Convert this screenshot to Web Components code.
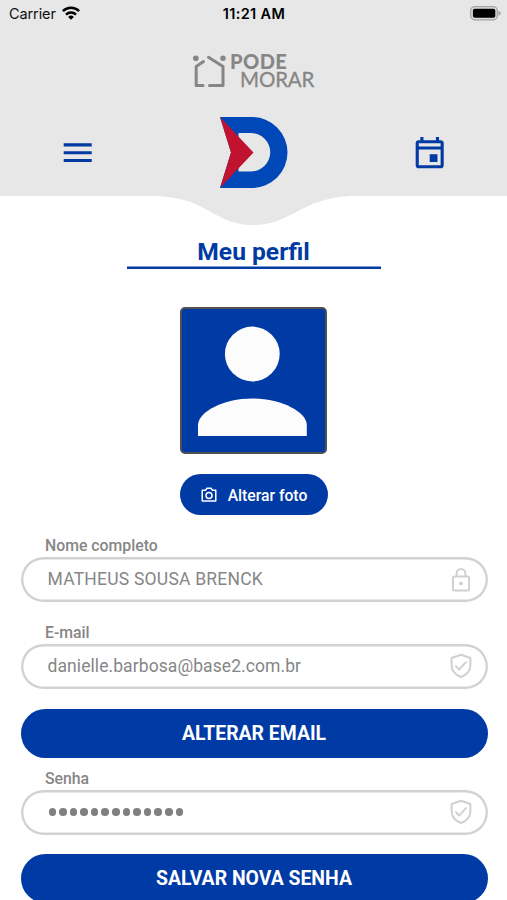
<!DOCTYPE html>
<html lang="pt-BR">
<head>
<meta charset="utf-8">
<title>Meu perfil</title>
<style>
html,body{margin:0;height:900px;overflow:hidden;background:#fff}
body{font-family:Roboto,"Liberation Sans",sans-serif}
</style>
</head>
<body>
<profile-page></profile-page>
<script>
function define(name, html) {
  const t = document.createElement('template');
  t.innerHTML = html;
  customElements.define(name, class extends HTMLElement {
    constructor() {
      super();
      this.attachShadow({mode: 'open'}).append(t.content.cloneNode(true));
    }
  });
}

define('status-bar', `
<style>
:host{display:grid;grid-template-columns:1fr auto 1fr;align-items:center;height:27px;padding:0 6px 0 9px;box-sizing:border-box;font:14.5px/27px Inter,sans-serif;color:#111}
.l{display:flex;align-items:center;gap:6px}
.l svg{margin-top:-2px}
.carrier{letter-spacing:-.1px}
.time{font-weight:600;letter-spacing:.35px;margin-right:2px;color:#000}
.r{display:flex;justify-content:flex-end}
svg{display:block}
</style>
<div class="l"><span class="carrier">Carrier</span>
<svg width="18" height="14" viewBox="0 0 18 14" fill="none" stroke="#000" stroke-width="2.5"><path d="M.9 5.2a11.5 11.5 0 0 1 16.2 0"/><path d="M4 8.6a7.1 7.1 0 0 1 10 0"/><path d="M9 13.8 6.1 10.9a4.1 4.1 0 0 1 5.8 0z" fill="#000" stroke="none"/></svg></div>
<span class="time">11:21 AM</span>
<div class="r"><svg width="31" height="15" viewBox="0 0 31 15"><rect x=".7" y=".7" width="26.6" height="13.1" rx="4" fill="#ddd" stroke="#a2a2a2" stroke-width="1.3"/><rect x="2.9" y="2.8" width="22.4" height="9" rx="1.8"/><path d="M28.5 4.8q2.2.8 2.2 2.5t-2.2 2.5z" fill="#a2a2a2"/></svg></div>`);

define('brand-mark', `
<style>
:host{display:flex;gap:2px;width:123px;height:40px;color:#868686;font-family:Lato,sans-serif;white-space:nowrap}
svg{display:block;flex:none}
.p,.m{display:block}
.words{padding-top:1px}
.p{font-size:20px;font-weight:900;line-height:18px;letter-spacing:.45px;margin-left:1px}
.m{font-size:20.5px;line-height:18px;letter-spacing:-.15px;margin-left:11px;-webkit-text-stroke:.3px #868686}
</style>
<svg width="35" height="40" viewBox="0 0 35 40">
<g fill="none" stroke="#868686" stroke-width="3" stroke-linecap="round" stroke-linejoin="round"><path d="M11 34.5H4.2V15.5L11.5 10.5"/><path d="M17.5 34.5H31V15.5L16.5 6.3"/></g>
<circle cx="3.8" cy="7.2" r="2.8" fill="#868686"/><circle cx="31" cy="7.2" r="2.7" fill="#868686"/></svg>
<div class="words"><span class="p">PODE</span><span class="m">MORAR</span></div>`);

define('app-header', `
<style>
:host{display:block;height:225px;background:linear-gradient(#e7e7e7 0 0) top/100% 196px no-repeat}
.brand{display:flex;justify-content:center;height:66px;padding-top:24px}
.nav{display:grid;grid-template-columns:38px 68px 38px;justify-content:space-between;align-items:center;height:71px;padding:0 58px 0 59px}
svg{display:block}
.wave{margin:8px auto 0}
</style>
<status-bar></status-bar>
<div class="brand"><brand-mark></brand-mark></div>
<div class="nav">
<svg width="37.4" height="37.4" viewBox="0 0 24 24" fill="#003aa3"><path d="M3 18h18v-2H3zM3 13h18v-2H3zM3 6v2h18V6z"/></svg>
<svg width="68" height="71" viewBox="0 0 68 71"><path fill="#0047b8" fill-rule="evenodd" d="M0 0H32A35.5 35.5 0 0 1 32 71H0L11 35.5zM18.5 16V54.5H31A19.25 19.25 0 0 0 31 16z"/><path fill="#c1132f" d="M0 0 33.5 35.5 0 71 11 35.5z"/></svg>
<svg width="37.4" height="37.4" viewBox="0 0 24 24" fill="#003aa3"><path d="M19 4h-1V2h-2v2H8V2H6v2H5a2 2 0 0 0-2 2v14a2 2 0 0 0 2 2h14a2 2 0 0 0 2-2V6a2 2 0 0 0-2-2zm0 16H5V10h14zm0-12H5V6h14zm-2 5h-5v5h5z"/></svg>
</div>
<svg class="wave" width="206" height="29" viewBox="0 0 206 29"><path fill="#e7e7e7" d="M0 0C58 0 61 29 102 29S150 0 206 0z"/></svg>`);

define('page-title', `
<style>:host{display:block;box-sizing:border-box;width:254px;height:34px;margin:10px auto 0;box-shadow:inset 0 -2.5px #003aa3;text-align:center;color:#003aa3;font:700 24.6px/33px Roboto,sans-serif;white-space:nowrap}</style><slot></slot>`);

define('profile-photo', `
<style>:host{display:block;box-sizing:border-box;width:147px;height:147px;margin:38px auto 0;border:2px solid #505050;border-radius:5px;background:#003aa5;overflow:hidden}svg{display:block}</style>
<svg width="143" height="143" viewBox="0 0 143 143" fill="#fcfcfc"><circle cx="70.3" cy="45" r="27.4"/><path d="M16 127V116C16 103 41.3 89.5 70.3 89.5S124.8 103 124.8 116V127z"/></svg>`);

define('photo-button', `
<style>:host{display:flex;align-items:center;justify-content:center;gap:10px;width:148px;height:41px;margin:20px auto 0;border-radius:21px;background:#003aa5;color:#fff;font:500 15.7px/41px Roboto,sans-serif;white-space:nowrap}svg{display:block}span{padding-top:2px}</style>
<svg width="18" height="18" viewBox="0 0 24 24" fill="none" stroke="#fff" stroke-width="2"><path d="M3 5.5h4.6L9.3 3h5.4l1.7 2.5H21V20H3z" stroke-linejoin="round"/><circle cx="12" cy="12.7" r="4"/></svg><span><slot></slot></span>`);

define('form-field', `
<style>
:host{display:block;color:#868686}
.label{padding-left:24.5px;height:22px;font:500 15.8px/22px Roboto,sans-serif}
.box{display:flex;align-items:center;justify-content:space-between;box-sizing:border-box;height:45px;padding:0 13.5px 0 27px;box-shadow:inset 0 0 0 2.4px #d2d2d2;border-radius:23px;font:400 17.5px/45px Roboto,sans-serif;white-space:nowrap}
::slotted(svg){display:block}
</style>
<div class="label"><slot name="label"></slot></div>
<div class="box"><slot></slot><slot name="icon"></slot></div>`);

define('password-dots', `
<style>:host{display:flex;gap:3.1px;margin-left:1px}i{width:7.5px;height:7.5px;border-radius:50%;background:#808080}</style>
${'<i></i>'.repeat(13)}`);

define('action-button', `
<style>:host{display:block;height:49px;border-radius:25px;background:#003aa5;color:#fff;text-align:center;font:700 19.4px/49px Roboto,sans-serif;white-space:nowrap}</style><slot></slot>`);

const shield = `<svg slot="icon" width="26" height="26" viewBox="0 0 26 26" fill="none" stroke="#d0d0d0" stroke-width="2" stroke-linecap="round" stroke-linejoin="round"><path d="M13 1.7 22.4 5v7.2c0 5.7-4.2 10.2-9.4 11.8C7.8 22.4 3.6 17.9 3.6 12.2V5z"/><path d="m8 13.3 3.2 3.3 6.7-7.4"/></svg>`;
const lock = `<svg slot="icon" width="26" height="26" viewBox="0 0 26 26" fill="none" stroke="#d0d0d0" stroke-width="2"><rect x="4.9" y="9.5" width="16.2" height="14" rx="1.5"/><path d="M8.6 9.3V6.4a4.4 4.4 0 0 1 8.8 0v2.9"/><circle cx="13" cy="16.5" r="1.9" fill="#d0d0d0" stroke="none"/></svg>`;

define('profile-form', `
<style>
:host{display:block;padding:0 19.5px 0 20.5px;margin-top:20px}
.n{letter-spacing:.22px}
.e{letter-spacing:.08px}
form-field+form-field{margin-top:19.5px}
.a{margin-top:20px}.b{margin-top:10px}.c{margin-top:19.5px}
</style>
<form-field><span slot="label">Nome completo</span><span class="n">MATHEUS SOUSA BRENCK</span>${lock}</form-field>
<form-field><span slot="label">E-mail</span><span class="e">danielle.barbosa@base2.com.br</span>${shield}</form-field>
<action-button class="a">ALTERAR EMAIL</action-button>
<form-field class="b"><span slot="label">Senha</span><password-dots></password-dots>${shield}</form-field>
<action-button class="c">SALVAR NOVA SENHA</action-button>`);

define('profile-page', `
<style>:host{display:block;width:507px;height:900px;overflow:hidden;background:#fff}</style>
<app-header></app-header>
<page-title>Meu perfil</page-title>
<profile-photo></profile-photo>
<photo-button>Alterar foto</photo-button>
<profile-form></profile-form>`);
</script>
</body>
</html>
